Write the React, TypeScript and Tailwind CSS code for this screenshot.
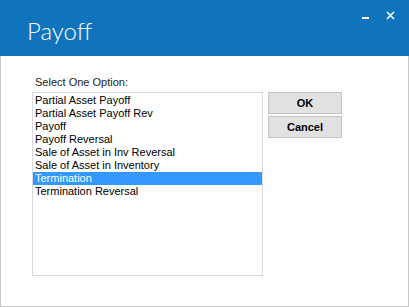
import React from 'react';

const options = [
  'Partial Asset Payoff',
  'Partial Asset Payoff Rev',
  'Payoff',
  'Payoff Reversal',
  'Sale of Asset in Inv Reversal',
  'Sale of Asset in Inventory',
  'Termination',
  'Termination Reversal',
];

export default function App() {
  const [selected, setSelected] = React.useState('Termination');

  return (
    <div className="w-[409px] h-[307px] flex flex-col bg-white font-['Liberation_Sans',Arial,sans-serif]">
      <div className="h-[56px] bg-[#1074bc] flex items-start justify-between shrink-0">
        <h1 className="pl-[27px] pt-[17px] text-[24px] leading-[28px] font-light text-white font-['Lato',sans-serif]">
          Payoff
        </h1>
        <div className="flex items-center pt-[10px] pr-[14px] gap-[16px]">
          <svg width="8" height="10" viewBox="0 0 8 10">
            <rect x="0" y="7" width="7" height="2" fill="white" />
          </svg>
          <svg width="9" height="9" viewBox="0 0 9 9">
            <path d="M1 1L8 8M8 1L1 8" stroke="white" strokeWidth="1.6" />
          </svg>
        </div>
      </div>
      <div className="flex-1 border-x border-b border-[#c8c8c8] pl-[31px] pt-[20px]">
        <div className="pl-[3px] text-[11px] leading-[13px] text-[#222]">Select One Option:</div>
        <div className="flex mt-[3px] gap-[5px]">
          <div className="w-[231px] h-[184px] border border-[#d9d9de] pt-[1px]">
            {options.map((o) => (
              <div
                key={o}
                onClick={() => setSelected(o)}
                className={
                  o === selected
                    ? 'h-[13px] pl-[2px] text-[11px] leading-[13px] bg-[#3399ff] text-white'
                    : 'h-[13px] pl-[2px] text-[11px] leading-[13px] text-black'
                }
              >
                {o}
              </div>
            ))}
          </div>
          <div className="flex flex-col gap-[2px]">
            <button className="w-[74px] h-[22px] bg-[#e1e1e1] border border-[#c4c4c4] text-[11px] font-bold text-black">
              OK
            </button>
            <button className="w-[74px] h-[22px] bg-[#e1e1e1] border border-[#c4c4c4] text-[11px] font-bold text-black">
              Cancel
            </button>
          </div>
        </div>
      </div>
    </div>
  );
}
